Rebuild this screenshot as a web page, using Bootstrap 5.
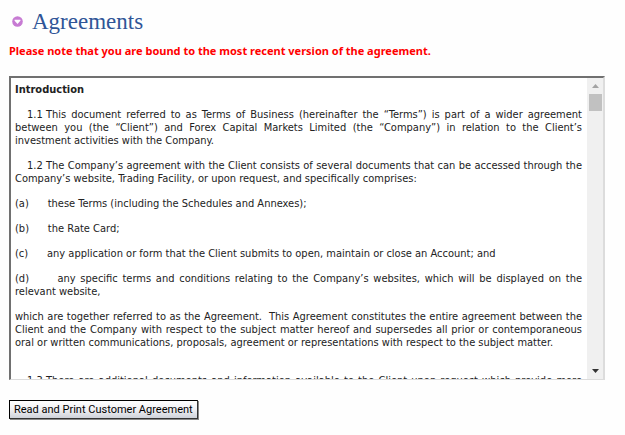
<!DOCTYPE html>
<html lang="en">
<head>
<meta charset="utf-8">
<meta name="viewport" content="width=device-width, initial-scale=1">
<title>Agreements</title>
<link href="https://cdn.jsdelivr.net/npm/bootstrap@5.3.0/dist/css/bootstrap.min.css" rel="stylesheet">
<style>
  body { font-family: "DejaVu Sans Condensed", "DejaVu Sans", sans-serif; font-size: 11px; line-height: 13px; color: #222; background: #fefefe; padding: 8px 20px 8px 9px; }
  .page-title { font-family: "Liberation Serif", serif; font-size: 23px; line-height: 28px; color: #2f5597; }
  .title-icon { width: 11px; height: 11px; margin: 0 9px 2px 3px; }
  .notice { font-family: "Noto Sans", sans-serif; color: #f00; margin: 8px 0 19px; }
  .agreement-box { height: 304px; border: 2px solid; border-color: #707070 #dcdcdc #dcdcdc #707070; border-bottom-width: 1px; background: #fff; }
  .agreement-text { padding: 5px 5px 0 4px; text-align: justify; }
  .agreement-text p { margin: 0 0 12px; }
  .agreement-text .clause { text-indent: 12px; }
  .agreement-text .closing { margin-bottom: 25px; }
  .scroll-track { width: 16px; background: #f0f0f0; padding: 6px 1px; }
  .scroll-thumb { width: 13px; height: 17px; background: #c1c1c1; margin-top: 6px; }
  .print-btn { font: 11px/15px Roboto, Arial, sans-serif; color: #000; margin-top: 20px; padding: 1px 4px; border: 1px solid; border-color: #000 #333 #333 #000; box-shadow: 1px 1px 0 #888; background: linear-gradient(#fff, #f0f0f3 50%, #cfd2da); }
</style>
<script src="https://cdn.jsdelivr.net/npm/bootstrap@5.3.0/dist/js/bootstrap.bundle.min.js"></script>
</head>
<body>
<main>
  <header class="d-flex align-items-center">
    <svg class="title-icon" viewBox="0 0 11 11" aria-hidden="true"><circle cx="5.5" cy="5.500" r="5.3" fill="#c77bd3"/><path d="M2.600 3.700h5.800v1.100L5.500 7.900 2.600 4.800z" fill="#fff"/></svg>
    <h1 class="page-title fw-normal mb-0">Agreements</h1>
  </header>
  <p class="notice fw-bold">Please note that you are bound to the most recent version of the agreement.</p>

  <section class="agreement-box d-flex" aria-label="Customer agreement">
    <div class="agreement-text flex-grow-1 overflow-hidden" tabindex="0">
      <p><strong>Introduction</strong></p>
      <p class="clause">1.1&#8196;This document referred to as Terms of Business (hereinafter the “Terms”) is part of a wider agreement between you (the “Client”) and Forex Capital Markets Limited (the “Company”) in relation to the Client’s investment activities with the Company.</p>
      <p class="clause">1.2&#8196;The Company’s agreement with the Client consists of several documents that can be accessed through the Company’s website, Trading Facility, or upon request, and specifically comprises:</p>
      <p>(a)&nbsp;&nbsp;&nbsp;&nbsp;&nbsp; these Terms (including the Schedules and Annexes);</p>
      <p>(b)&nbsp;&nbsp;&nbsp;&nbsp;&nbsp; the Rate Card;</p>
      <p>(c)&nbsp;&nbsp;&nbsp;&nbsp;&nbsp; any application or form that the Client submits to open, maintain or close an Account; and</p>
      <p>(d)&nbsp;&nbsp;&nbsp;&nbsp;&nbsp; any specific terms and conditions relating to the Company’s websites, which will be displayed on the relevant website,</p>
      <p class="closing">which are together referred to as the Agreement.&nbsp; This Agreement constitutes the entire agreement between the Client and the Company with respect to the subject matter hereof and supersedes all prior or contemporaneous oral or written communications, proposals, agreement or representations with respect to the subject matter.</p>
      <p class="clause">1.3&#8196;There are additional documents and information available to the Client upon request which provide more information on the Company and its services.</p>
    </div>
    <div class="scroll-track d-flex flex-column align-items-center flex-shrink-0" aria-hidden="true">
      <svg width="7" height="4" viewBox="0 0 7 4"><path d="M0 4h7L3.500 0z" fill="#a3a3a3"/></svg>
      <div class="scroll-thumb"></div>
      <svg class="mt-auto" width="7" height="4" viewBox="0 0 7 4"><path d="M0 0h7L3.500 4z" fill="#333"/></svg>
    </div>
  </section>

  <button type="button" class="print-btn">Read and Print Customer Agreement</button>
</main>
</body>
</html>
